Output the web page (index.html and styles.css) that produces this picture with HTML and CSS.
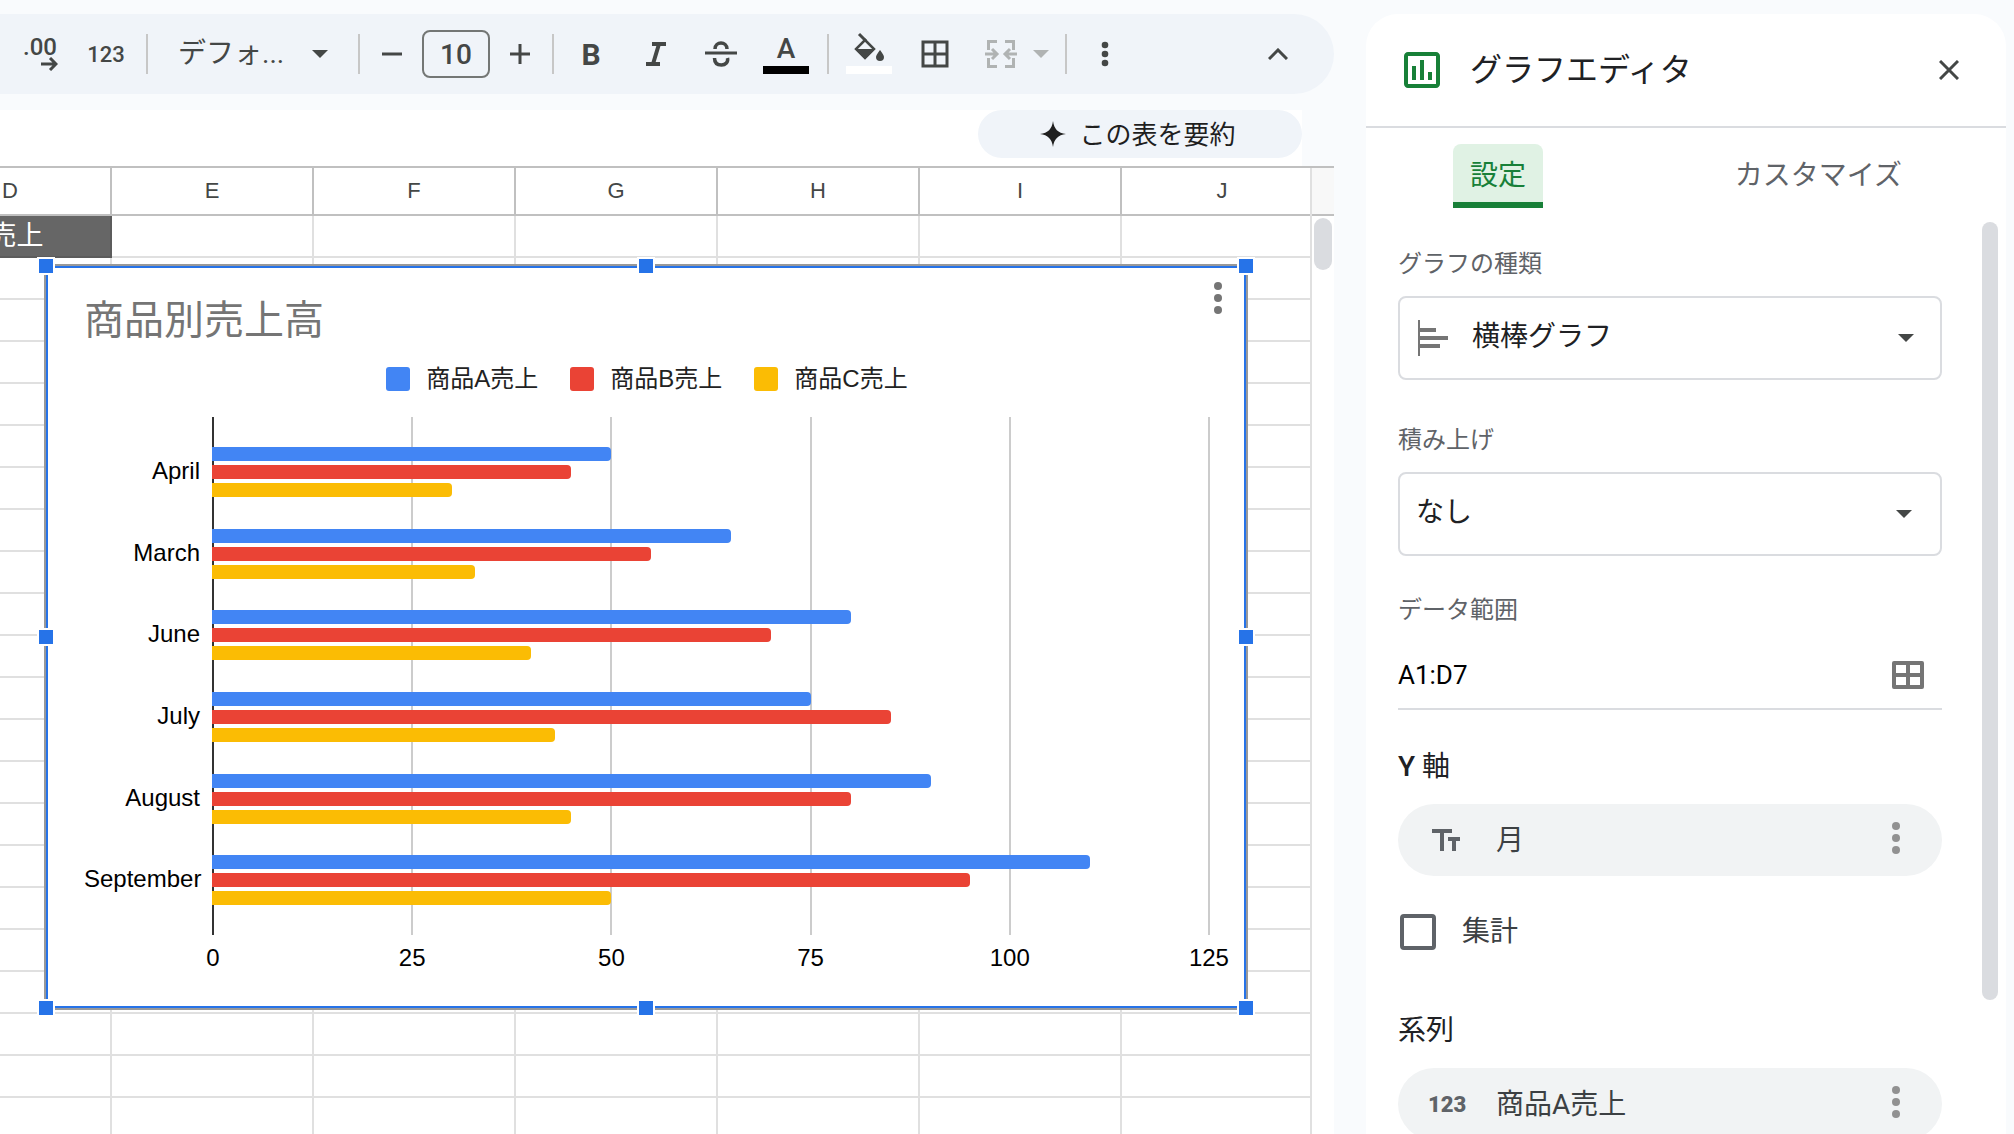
FILE: index.html
```html
<!DOCTYPE html>
<html lang="ja">
<head>
  <meta charset="UTF-8">
  <title>グラフエディタ</title>
  <link rel="stylesheet" href="styles.css">
</head>
<body>

  <main class="workspace">
    <div class="toolbar" role="toolbar">
      <div class="group">
        <button class="tool decimals" aria-label="小数点以下の桁数を増やす">
          <span>.00</span>
          <svg width="18" height="14" viewBox="0 0 18 14"><path d="M1 7h13M10 1l6 6-6 6" fill="none" stroke="currentColor" stroke-width="3"/></svg>
        </button>
        <button class="tool number-format">123</button>
      </div>
      <span class="divider"></span>
      <div class="picker font-picker">
        <select aria-label="フォント"><option>デフォ...</option></select>
        <svg class="caret" width="16" height="8" viewBox="0 0 16 8"><path d="M0 0h16L8 8z"/></svg>
      </div>
      <span class="divider"></span>
      <div class="group">
        <button class="tool step" aria-label="縮小"><svg width="20" height="20" viewBox="0 0 20 20"><path d="M0 10h20" stroke="currentColor" stroke-width="3"/></svg></button>
        <input class="font-size" type="text" value="10" aria-label="フォントサイズ">
        <button class="tool step" aria-label="拡大"><svg width="20" height="20" viewBox="0 0 20 20"><path d="M0 10h20M10 0v20" stroke="currentColor" stroke-width="3"/></svg></button>
      </div>
      <span class="divider"></span>
      <div class="group marks">
        <button class="tool bold">B</button>
        <button class="tool" aria-label="斜体"><svg width="22" height="24" viewBox="0 0 22 24"><path d="M7 2h14M1 22h14M14 2L8 22" fill="none" stroke="currentColor" stroke-width="4"/></svg></button>
        <button class="tool" aria-label="取り消し線"><svg width="32" height="26" viewBox="0 0 32 26"><path d="M0 12h32" stroke="currentColor" stroke-width="3"/><path d="M10 8c0-4 3-6 6-6s6 2 6 6M9.500 17c0 5 3 7 7 7s7-3 6-7" fill="none" stroke="currentColor" stroke-width="3.500"/></svg></button>
        <button class="tool swatch text-color"><span>A</span></button>
      </div>
      <span class="divider"></span>
      <div class="group fills">
        <button class="tool swatch fill-color" aria-label="塗りつぶしの色">
          <svg width="30" height="30" viewBox="0 0 30 30"><path d="M5 2l7 7" stroke="currentColor" stroke-width="3"/><path d="M11 8l9 9-9 9-9-9z" fill="none" stroke="currentColor" stroke-width="2.500"/><path d="M1 17h20L11 27zM26 18s-4 5-4 7a4 4 0 0 0 8 0c0-2-4-7-4-7z" fill="currentColor"/></svg>
        </button>
        <button class="tool" aria-label="枠線"><svg width="28" height="28" viewBox="0 0 28 28"><path d="M2 2h24v24H2zM2 14h24M14 2v24" fill="none" stroke="currentColor" stroke-width="3"/></svg></button>
        <div class="group merge">
          <button class="tool" aria-label="セルを結合" disabled><svg width="32" height="28" viewBox="0 0 32 28"><path d="M12 1.500H3.500V10M20 1.500h8.500V10M3.500 18v8.500H12M28.500 18v8.500H20M0 14h12M7 9l5 5-5 5M32 14H20M25 9l-5 5 5 5" fill="none" stroke="currentColor" stroke-width="3"/></svg></button>
          <button class="tool merge-more" aria-label="結合の種類" disabled><svg width="16" height="8" viewBox="0 0 16 8"><path d="M0 0h16L8 8z" fill="currentColor"/></svg></button>
        </div>
      </div>
      <span class="divider"></span>
      <button class="tool" aria-label="その他"><svg width="8" height="26" viewBox="0 0 8 26" fill="currentColor"><circle cx="4" cy="4" r="3.3"/><circle cx="4" cy="13" r="3.3"/><circle cx="4" cy="22" r="3.3"/></svg></button>
      <button class="tool collapse" aria-label="メニューを隠す"><svg width="20" height="12" viewBox="0 0 20 12"><path d="M1 11l9-9 9 9" fill="none" stroke="currentColor" stroke-width="3"/></svg></button>
    </div>

    <div class="formula-row">
      <button class="summarize">
        <svg width="26" height="26" viewBox="0 0 26 26"><path d="M13 0c1 8 5 12 13 13-8 1-12 5-13 13-1-8-5-12-13-13 8-1 12-5 13-13z" fill="currentColor"/></svg>
        <span>この表を要約</span>
      </button>
    </div>

    <div class="sheet">
      <div class="cells">
        <table class="grid">
          <thead>
            <tr><th>D</th><th>E</th><th>F</th><th>G</th><th>H</th><th>I</th><th>J</th></tr>
          </thead>
          <tbody id="rows">
            <tr><td class="filled">商品C売上</td><td></td><td></td><td></td><td></td><td></td><td></td></tr>
          </tbody>
        </table>
      </div>
      <div class="sheet-scroll"><div class="sheet-thumb"></div></div>

      <section class="chart">
        <button class="chart-menu" aria-label="グラフのメニュー"><svg width="8" height="32" viewBox="0 0 8 32" fill="currentColor"><circle cx="4" cy="4" r="4"/><circle cx="4" cy="16" r="4"/><circle cx="4" cy="28" r="4"/></svg></button>
        <h2>商品別売上高</h2>
        <div class="legend">
          <span class="key a">商品A売上</span>
          <span class="key b">商品B売上</span>
          <span class="key c">商品C売上</span>
        </div>
        <div class="plot">
          <div class="gridlines"><i></i><i></i><i></i><i></i><i></i><i></i></div>
          <div class="months" id="months"></div>
        </div>
        <div class="ticks"><span>0</span><span>25</span><span>50</span><span>75</span><span>100</span><span>125</span></div>
        <span class="handle top left"></span>
        <span class="handle top center"></span>
        <span class="handle top right"></span>
        <span class="handle middle left"></span>
        <span class="handle middle right"></span>
        <span class="handle bottom left"></span>
        <span class="handle bottom center"></span>
        <span class="handle bottom right"></span>
      </section>
    </div>
  </main>

  <aside class="editor">
    <header class="editor-header">
      <svg width="48" height="48" viewBox="0 0 24 24" fill="#188038"><path d="M19 3H5c-1.100 0-2 .9-2 2v14c0 1.100.9 2 2 2h14c1.100 0 2-.9 2-2V5c0-1.100-.9-2-2-2zm0 16H5V5h14v14zM7 10h2v7H7zM11 7h2v10h-2zM15 13h2v4h-2z"/></svg>
      <h1>グラフエディタ</h1>
      <button class="close" aria-label="閉じる"><svg width="20" height="20" viewBox="0 0 20 20"><path d="M1 1l18 18M19 1L1 19" stroke="currentColor" stroke-width="3"/></svg></button>
    </header>
    <nav class="tabs">
      <button class="tab active">設定</button>
      <button class="tab">カスタマイズ</button>
    </nav>
    <div class="editor-body">
      <form class="fields">
        <label for="chartType">グラフの種類</label>
        <div class="picker boxed with-icon">
          <svg class="type-icon" width="30" height="36" viewBox="0 0 30 36"><path d="M0 0h2v36H0zM2 8h16v4H2zM2 16h28v4H2zM2 24h20v4H2z"/></svg>
          <select id="chartType"><option>横棒グラフ</option></select>
          <svg class="caret" width="16" height="8" viewBox="0 0 16 8"><path d="M0 0h16L8 8z"/></svg>
        </div>

        <label for="stacking">積み上げ</label>
        <div class="picker boxed">
          <select id="stacking"><option>なし</option></select>
          <svg class="caret" width="16" height="8" viewBox="0 0 16 8"><path d="M0 0h16L8 8z"/></svg>
        </div>

        <label for="dataRange">データ範囲</label>
        <div class="range">
          <input type="text" id="dataRange" value="A1:D7">
          <button type="button" aria-label="データ範囲を選択"><svg width="32" height="28" viewBox="0 0 32 28"><path d="M2 2h28v24H2zM2 14h28M16 2v24" fill="none" stroke="currentColor" stroke-width="4" stroke-linejoin="round"/></svg></button>
        </div>

        <h3><b>Y</b> 軸</h3>
        <div class="pill">
          <svg class="pill-icon" width="28" height="22" viewBox="0 0 28 22"><path d="M0 2h20M10 2v20M16 10h12M22 10v12" fill="none" stroke="currentColor" stroke-width="4"/></svg>
          <span>月</span>
          <button type="button" aria-label="Y 軸のメニュー"><svg width="8" height="32" viewBox="0 0 8 32" fill="currentColor"><circle cx="4" cy="4" r="4"/><circle cx="4" cy="16" r="4"/><circle cx="4" cy="28" r="4"/></svg></button>
        </div>

        <div class="check">
          <input type="checkbox" id="aggregate">
          <label for="aggregate">集計</label>
        </div>

        <h3>系列</h3>
        <div class="pill">
          <b class="pill-icon">123</b>
          <span>商品A売上</span>
          <button type="button" aria-label="系列のメニュー"><svg width="8" height="32" viewBox="0 0 8 32" fill="currentColor"><circle cx="4" cy="4" r="4"/><circle cx="4" cy="16" r="4"/><circle cx="4" cy="28" r="4"/></svg></button>
        </div>
      </form>
      <div class="editor-thumb"></div>
    </div>
  </aside>

  <script src="script.js"></script>
</body>
</html>
```
FILE: styles.css
```css
* {
  box-sizing: border-box;
}
body {
  margin: 0;
  height: 100vh;
  overflow: hidden;
  display: grid;
  grid-template-columns: minmax(0, 1fr) 640px;
  gap: 32px;
  padding: 14px 8px 0 0;
  background: #f9fbfd;
  color: #202124;
  font-family: Roboto, "Noto Sans CJK JP", sans-serif;
  font-size: 28px;
}
button, input, select {
  font: inherit;
  color: inherit;
  background: none;
  border: none;
  padding: 0;
  margin: 0;
}
button {
  cursor: pointer;
}
svg {
  display: block;
  flex: none;
}
h1, h2, h3 {
  margin: 0;
  font-weight: 400;
}

/* toolbar */
.workspace {
  display: flex;
  flex-direction: column;
  min-height: 0;
}
.toolbar {
  flex: none;
  display: flex;
  align-items: center;
  height: 80px;
  padding: 0 30px 0 12px;
  border-radius: 0 40px 40px 0;
  background: #f0f4f9;
  color: #444746;
}
.group {
  display: flex;
  align-items: center;
  gap: 10px;
}
.divider {
  width: 2px;
  height: 40px;
  margin: 0 12px;
  background: #c7c7c7;
}
.tool {
  display: flex;
  align-items: center;
  justify-content: center;
  width: 52px;
  height: 48px;
}
.group .tool {
  width: 56px;
}
.decimals {
  flex-direction: column;
  font-size: 24px;
  font-weight: 500;
  line-height: 20px;
}
.decimals svg {
  align-self: flex-end;
  margin-right: 10px;
}
.number-format {
  font-size: 22px;
  font-weight: 500;
}
.picker {
  display: grid;
  align-items: center;
}
.picker > * {
  grid-area: 1 / 1;
}
.picker select {
  appearance: none;
  width: 100%;
  height: 100%;
  outline: none;
}
.caret {
  justify-self: end;
  fill: #444746;
  pointer-events: none;
}
.font-picker {
  width: 186px;
  height: 48px;
}
.font-picker select {
  padding: 0 0 2px 18px;
}
.font-picker .caret {
  margin-right: 18px;
}
.group .step {
  width: 40px;
}
.font-size {
  width: 68px;
  height: 48px;
  border: 2px solid #747775;
  border-radius: 8px;
  text-align: center;
  font-weight: 500;
}
.marks {
  gap: 15px;
  padding-right: 4px;
}
.marks .tool {
  width: 50px;
}
.bold {
  font-size: 30px;
  font-weight: 700;
}
.swatch {
  flex-direction: column;
  justify-content: flex-end;
  line-height: 34px;
  font-weight: 500;
}
.swatch::after {
  content: "";
  width: 46px;
  height: 8px;
  margin: 0 0 4px;
  background: #000;
}
.fill-color svg {
  margin-bottom: 4px;
}
.fill-color::after {
  background: #fff;
}
.fills {
  gap: 10px;
}
.merge {
  gap: 0;
  color: #b0b3b3;
}
.group .merge-more {
  width: 24px;
}
.collapse {
  margin-left: auto;
}

/* sheet */
.formula-row {
  flex: none;
  display: flex;
  justify-content: flex-end;
  height: 56px;
  margin: 16px 32px 0 0;
  background: #fff;
}
.summarize {
  display: flex;
  align-items: center;
  justify-content: center;
  gap: 13px;
  width: 324px;
  height: 48px;
  padding-right: 4px;
  border-radius: 24px;
  background: #f0f4f9;
  color: #1f1f1f;
  font-size: 26px;
}
.summarize span {
  padding-bottom: 4px;
}
.sheet {
  position: relative;
  flex: 1;
  min-height: 0;
  display: flex;
  border-top: 2px solid #c0c0c0;
  background: #fff;
}
.cells {
  flex: 1;
  overflow: hidden;
  border-right: 2px solid #e0e0e0;
}
.grid {
  table-layout: fixed;
  width: 1414px;
  margin-left: -90px;
  border-collapse: separate;
  border-spacing: 0;
  font-family: "Liberation Sans", "Noto Sans CJK JP", sans-serif;
}
.grid th {
  height: 48px;
  padding: 0;
  border-right: 2px solid #c0c0c0;
  border-bottom: 2px solid #c0c0c0;
  color: #444746;
  font-size: 22px;
  font-weight: 400;
}
.grid td {
  height: 42px;
  padding: 0 6px;
  border-right: 2px solid #e0e0e0;
  border-bottom: 2px solid #e0e0e0;
  font-size: 27px;
  line-height: 36px;
  white-space: nowrap;
}
.grid .filled {
  background: #666;
  border-color: #5c5c5c;
  color: #fff;
}
.sheet-scroll {
  width: 22px;
  padding: 0 2px;
}
.sheet-scroll::before {
  content: "";
  display: block;
  height: 46px;
  margin: 0 -2px 2px;
  border-bottom: 2px solid #c0c0c0;
  background: #f8f8f8;
}
.sheet-thumb {
  height: 52px;
  border-radius: 9px;
  background: #dadce0;
}

/* chart */
.chart {
  position: absolute;
  top: 96px;
  left: 44px;
  width: 1204px;
  padding: 30px 36px 36px 38px;
  border: 2px solid #999;
  box-shadow: inset 0 0 0 2px #2673e8;
  background: #fff;
  color: #000;
  font-family: "Liberation Sans", "Noto Sans CJK JP", sans-serif;
  font-size: 24px;
}
.chart h2 {
  color: #757575;
  font-size: 40px;
  line-height: 48px;
}
.chart-menu {
  position: absolute;
  top: 16px;
  right: 24px;
  color: #757575;
}
.legend {
  display: flex;
  justify-content: center;
  gap: 32px;
  margin-top: 19px;
  line-height: 32px;
  color: #222;
}
.key {
  display: flex;
  align-items: center;
  gap: 16px;
}
.key::before {
  content: "";
  width: 24px;
  height: 24px;
  border-radius: 3px;
}
.key.a::before, .bar.a {
  background: #4285f4;
}
.key.b::before, .bar.b {
  background: #ea4335;
}
.key.c::before, .bar.c {
  background: #fbbc04;
}
.plot {
  display: grid;
  height: 518px;
  margin-top: 22px;
}
.gridlines, .months {
  grid-area: 1 / 1;
}
.gridlines {
  display: flex;
  justify-content: space-between;
  margin-left: 128px;
}
.gridlines i {
  width: 2px;
  background: #ccc;
}
.gridlines i:first-child {
  background: #333;
}
.months {
  display: flex;
  flex-direction: column;
  padding: 14px 0;
}
.month {
  flex: 1;
  display: grid;
  grid-template-columns: 116px 1fr;
  gap: 12px;
  align-items: center;
  text-align: right;
  line-height: 28px;
}
.month span {
  padding-bottom: 2px;
}
.bars {
  display: grid;
  gap: 4px;
}
.bar {
  height: 14px;
  border-radius: 0 4px 4px 0;
}
.ticks {
  display: flex;
  justify-content: space-between;
  margin: 9px 0 0 128px;
  line-height: 28px;
}
.ticks span {
  display: flex;
  justify-content: center;
  width: 2px;
}
.handle {
  position: absolute;
  width: 18px;
  height: 18px;
  border: 2px solid #fff;
  background: #2673e8;
}
.handle.top {
  top: -9px;
}
.handle.middle {
  top: calc(50% - 9px);
}
.handle.bottom {
  bottom: -9px;
}
.handle.left {
  left: -9px;
}
.handle.center {
  left: calc(50% - 9px);
}
.handle.right {
  right: -9px;
}

/* chart editor */
.editor {
  display: flex;
  flex-direction: column;
  min-height: 0;
  border-radius: 32px 32px 0 0;
  background: #fff;
}
.editor-header {
  flex: none;
  display: flex;
  align-items: center;
  height: 114px;
  padding: 0 47px 0 32px;
  border-bottom: 2px solid #dadce0;
}
.editor-header h1 {
  margin-left: 24px;
  font-size: 32px;
  line-height: 40px;
}
.close {
  margin-left: auto;
  color: #444746;
}
.tabs {
  flex: none;
  display: flex;
  justify-content: space-between;
  padding: 16px 87px 14px;
}
.tab {
  height: 64px;
  padding: 0 17px 6px;
  color: #5f6368;
}
.tab.active {
  border-bottom: 6px solid #188038;
  padding-bottom: 0;
  border-radius: 8px 8px 0 0;
  background: #e0f2e4;
  color: #188038;
}
.editor-body {
  flex: 1;
  min-height: 0;
  display: flex;
  justify-content: space-between;
  overflow: hidden;
  padding-right: 8px;
}
.fields {
  width: 544px;
  margin-left: 32px;
  padding-top: 26px;
}
.fields > label {
  display: block;
  margin-bottom: 16px;
  color: #5f6368;
  font-size: 24px;
  line-height: 32px;
}
.boxed {
  height: 84px;
  margin-bottom: 38px;
  border: 2px solid #dadce0;
  border-radius: 8px;
}
.boxed select {
  padding: 0 60px 4px 16px;
}
.boxed .caret {
  margin-right: 28px;
}
.with-icon {
  margin-bottom: 44px;
}
.with-icon select {
  padding-left: 72px;
}
.with-icon .caret {
  margin-right: 26px;
}
.type-icon {
  margin-left: 18px;
  fill: #757575;
}
.range {
  display: flex;
  align-items: center;
  height: 68px;
  padding-right: 18px;
  border-bottom: 2px solid #dadce0;
  color: #000;
  font-size: 26px;
}
.range input {
  flex: 1;
  min-width: 0;
  outline: none;
}
.range button {
  color: #757575;
}
.fields h3 {
  margin: 38px 0 18px;
  font-size: 28px;
  line-height: 38px;
}
.fields h3 b {
  font-weight: 500;
}
.pill {
  display: flex;
  align-items: center;
  height: 72px;
  padding: 0 42px 4px 30px;
  border-radius: 36px;
  background: #f1f3f4;
  color: #3c4043;
}
.pill-icon {
  width: 36px;
  margin: 4px 32px 0 0;
  color: #5f6368;
  font-size: 22px;
  font-weight: 900;
}
.pill button {
  margin-left: auto;
  color: #919191;
}
.check {
  display: flex;
  align-items: center;
  gap: 26px;
  margin: 38px 0 62px;
  padding-left: 2px;
  color: #3c4043;
}
.check input {
  appearance: none;
  width: 36px;
  height: 36px;
  border: 4px solid #5f6368;
  border-radius: 4px;
}
.check label {
  line-height: 36px;
}
.editor-thumb {
  width: 16px;
  height: 778px;
  border-radius: 8px;
  background: #dadce0;
}
```
FILE: script.js
```js
const AXIS_MAX = 125;

const sales = [
  { month: "April", a: 50, b: 45, c: 30 },
  { month: "March", a: 65, b: 55, c: 33 },
  { month: "June", a: 80, b: 70, c: 40 },
  { month: "July", a: 75, b: 85, c: 43 },
  { month: "August", a: 90, b: 80, c: 45 },
  { month: "September", a: 110, b: 95, c: 50 }
];

function bar(key, value) {
  return `<div class="bar ${key}" style="width: ${value / AXIS_MAX * 100}%"></div>`;
}

document.getElementById("months").innerHTML = sales.map(row => `
  <div class="month">
    <span>${row.month}</span>
    <div class="bars">${bar("a", row.a)}${bar("b", row.b)}${bar("c", row.c)}</div>
  </div>`).join("");

// empty rows under the table header
const rows = document.getElementById("rows");
for (let i = 0; i < 22; i++) {
  rows.insertAdjacentHTML("beforeend", "<tr>" + "<td></td>".repeat(7) + "</tr>");
}
```
